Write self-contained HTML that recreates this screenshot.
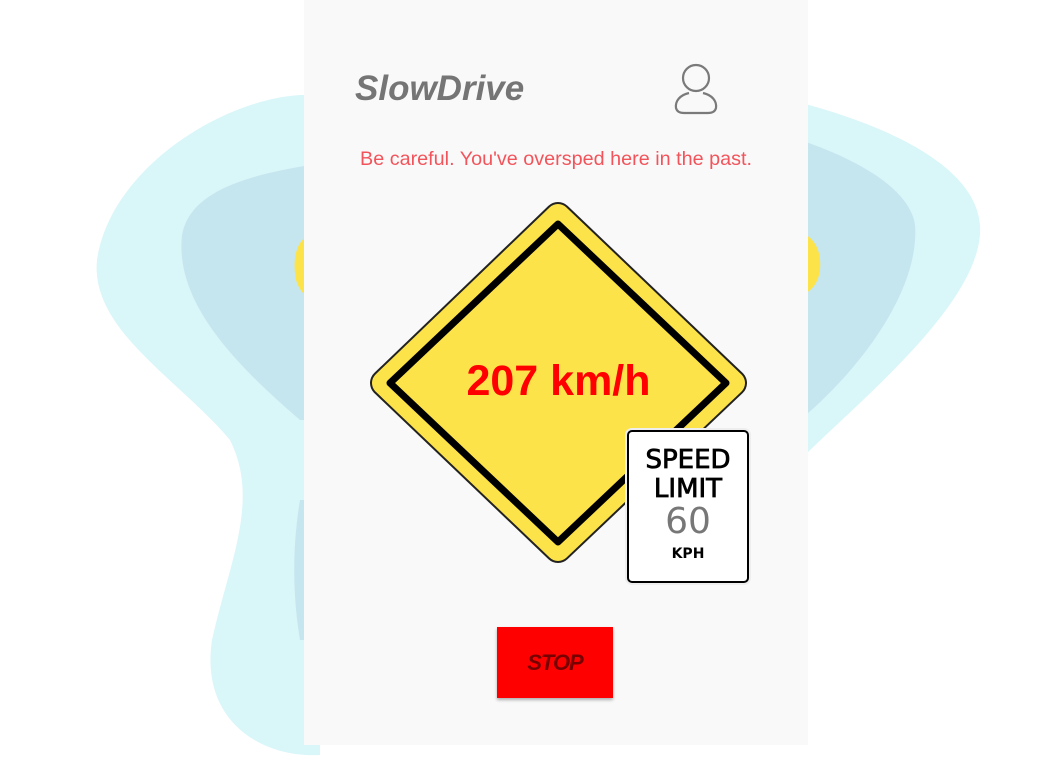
<!DOCTYPE html>
<html><head><meta charset="utf-8"><style>
html,body{margin:0;padding:0;width:1038px;height:758px;background:#fff;overflow:hidden;position:relative;font-family:"Liberation Sans",sans-serif}
svg.bg{position:absolute;left:0;top:0}
.card{position:absolute;left:304px;top:0;width:504px;height:745px;background:#f9f9f9}
.logo{position:absolute;left:355px;top:69px;font-size:35px;font-weight:bold;font-style:italic;color:#757575;letter-spacing:0px}
.msg{position:absolute;left:304px;width:504px;top:148px;text-align:center;font-size:19.8px;color:#f2545b}
.spd{position:absolute;left:370px;width:377px;top:357px;text-align:center;font-size:43px;font-weight:bold;color:#f00}
.sl{position:absolute;left:627px;top:430px;width:118px;height:149px;background:#fff;border:2px solid #000;border-radius:5px;box-shadow:0 0 0 2px #eee;text-align:center;font-family:"DejaVu Sans",sans-serif}
.stop{position:absolute;left:497px;top:627px;width:116px;height:71px;background:#f00;box-shadow:0 2px 3px rgba(0,0,0,.3);text-align:center;line-height:71px;font-size:22px;font-weight:bold;font-style:italic;color:#700;letter-spacing:-1px}
</style></head><body>
<svg class="bg" width="1038" height="758">
<path d="M300 95 C220 100 110 170 97 260 C90 330 180 380 230 440 C260 500 230 560 212 640 C200 720 260 758 320 755 L320 95 Z" fill="#d9f6f9"/>
<path d="M790 100 C870 120 975 160 980 225 C985 300 860 400 800 460 L790 100 Z" fill="#d9f6f9"/>
<path d="M310 165 C250 175 190 190 182 235 C175 300 230 360 300 420 L310 420 Z" fill="#c6e6ef"/>
<path d="M300 500 C290 560 295 610 300 640 L310 640 L310 500 Z" fill="#c6e6ef"/>
<path d="M800 140 C860 160 910 190 915 225 C920 290 860 370 800 420 Z" fill="#c6e6ef"/>
<path d="M310 235 C296 240 292 260 296 280 C300 292 305 296 310 296 Z" fill="#fde34a"/>
<path d="M800 232 C812 236 822 248 820 270 C818 285 810 292 800 296 Z" fill="#fde34a"/>
</svg>
<div class="card"></div>
<div class="logo">SlowDrive</div>
<svg style="position:absolute;left:670px;top:60px" width="54" height="58">
<circle cx="26" cy="18" r="13" fill="none" stroke="#7a7a7a" stroke-width="2.2"/>
<path d="M19 33 C10 35 5 41 6 48 C7 52 10 53 14 53 L38 53 C42 53 45 52 46 48 C47 41 42 35 33 33" fill="none" stroke="#7a7a7a" stroke-width="2.2"/>
</svg>
<div class="msg">Be careful. You've oversped here in the past.</div>
<svg style="position:absolute;left:0;top:0" width="1038" height="758">
<polygon points="558,216 384,383 558,549 733,383" fill="#fde34a" stroke="#222" stroke-width="28" stroke-linejoin="round"/>
<polygon points="558,216 384,383 558,549 733,383" fill="#fde34a" stroke="#fde34a" stroke-width="24" stroke-linejoin="round"/>
<polygon points="558,224 390,383 558,542 726,383" fill="none" stroke="#000" stroke-width="7" stroke-linejoin="round"/>
</svg>
<div class="spd">207 km/h</div>
<div class="sl">
<div style="font-size:26px;line-height:29px;margin-top:14px;color:#000;-webkit-text-stroke:0.8px #000">SPEED<br>LIMIT</div>
<div style="font-size:36px;line-height:36px;color:#777">60</div>
<div style="font-size:14px;font-weight:bold;margin-top:6px;color:#000">KPH</div>
</div>
<div class="stop">STOP</div>
</body></html>
